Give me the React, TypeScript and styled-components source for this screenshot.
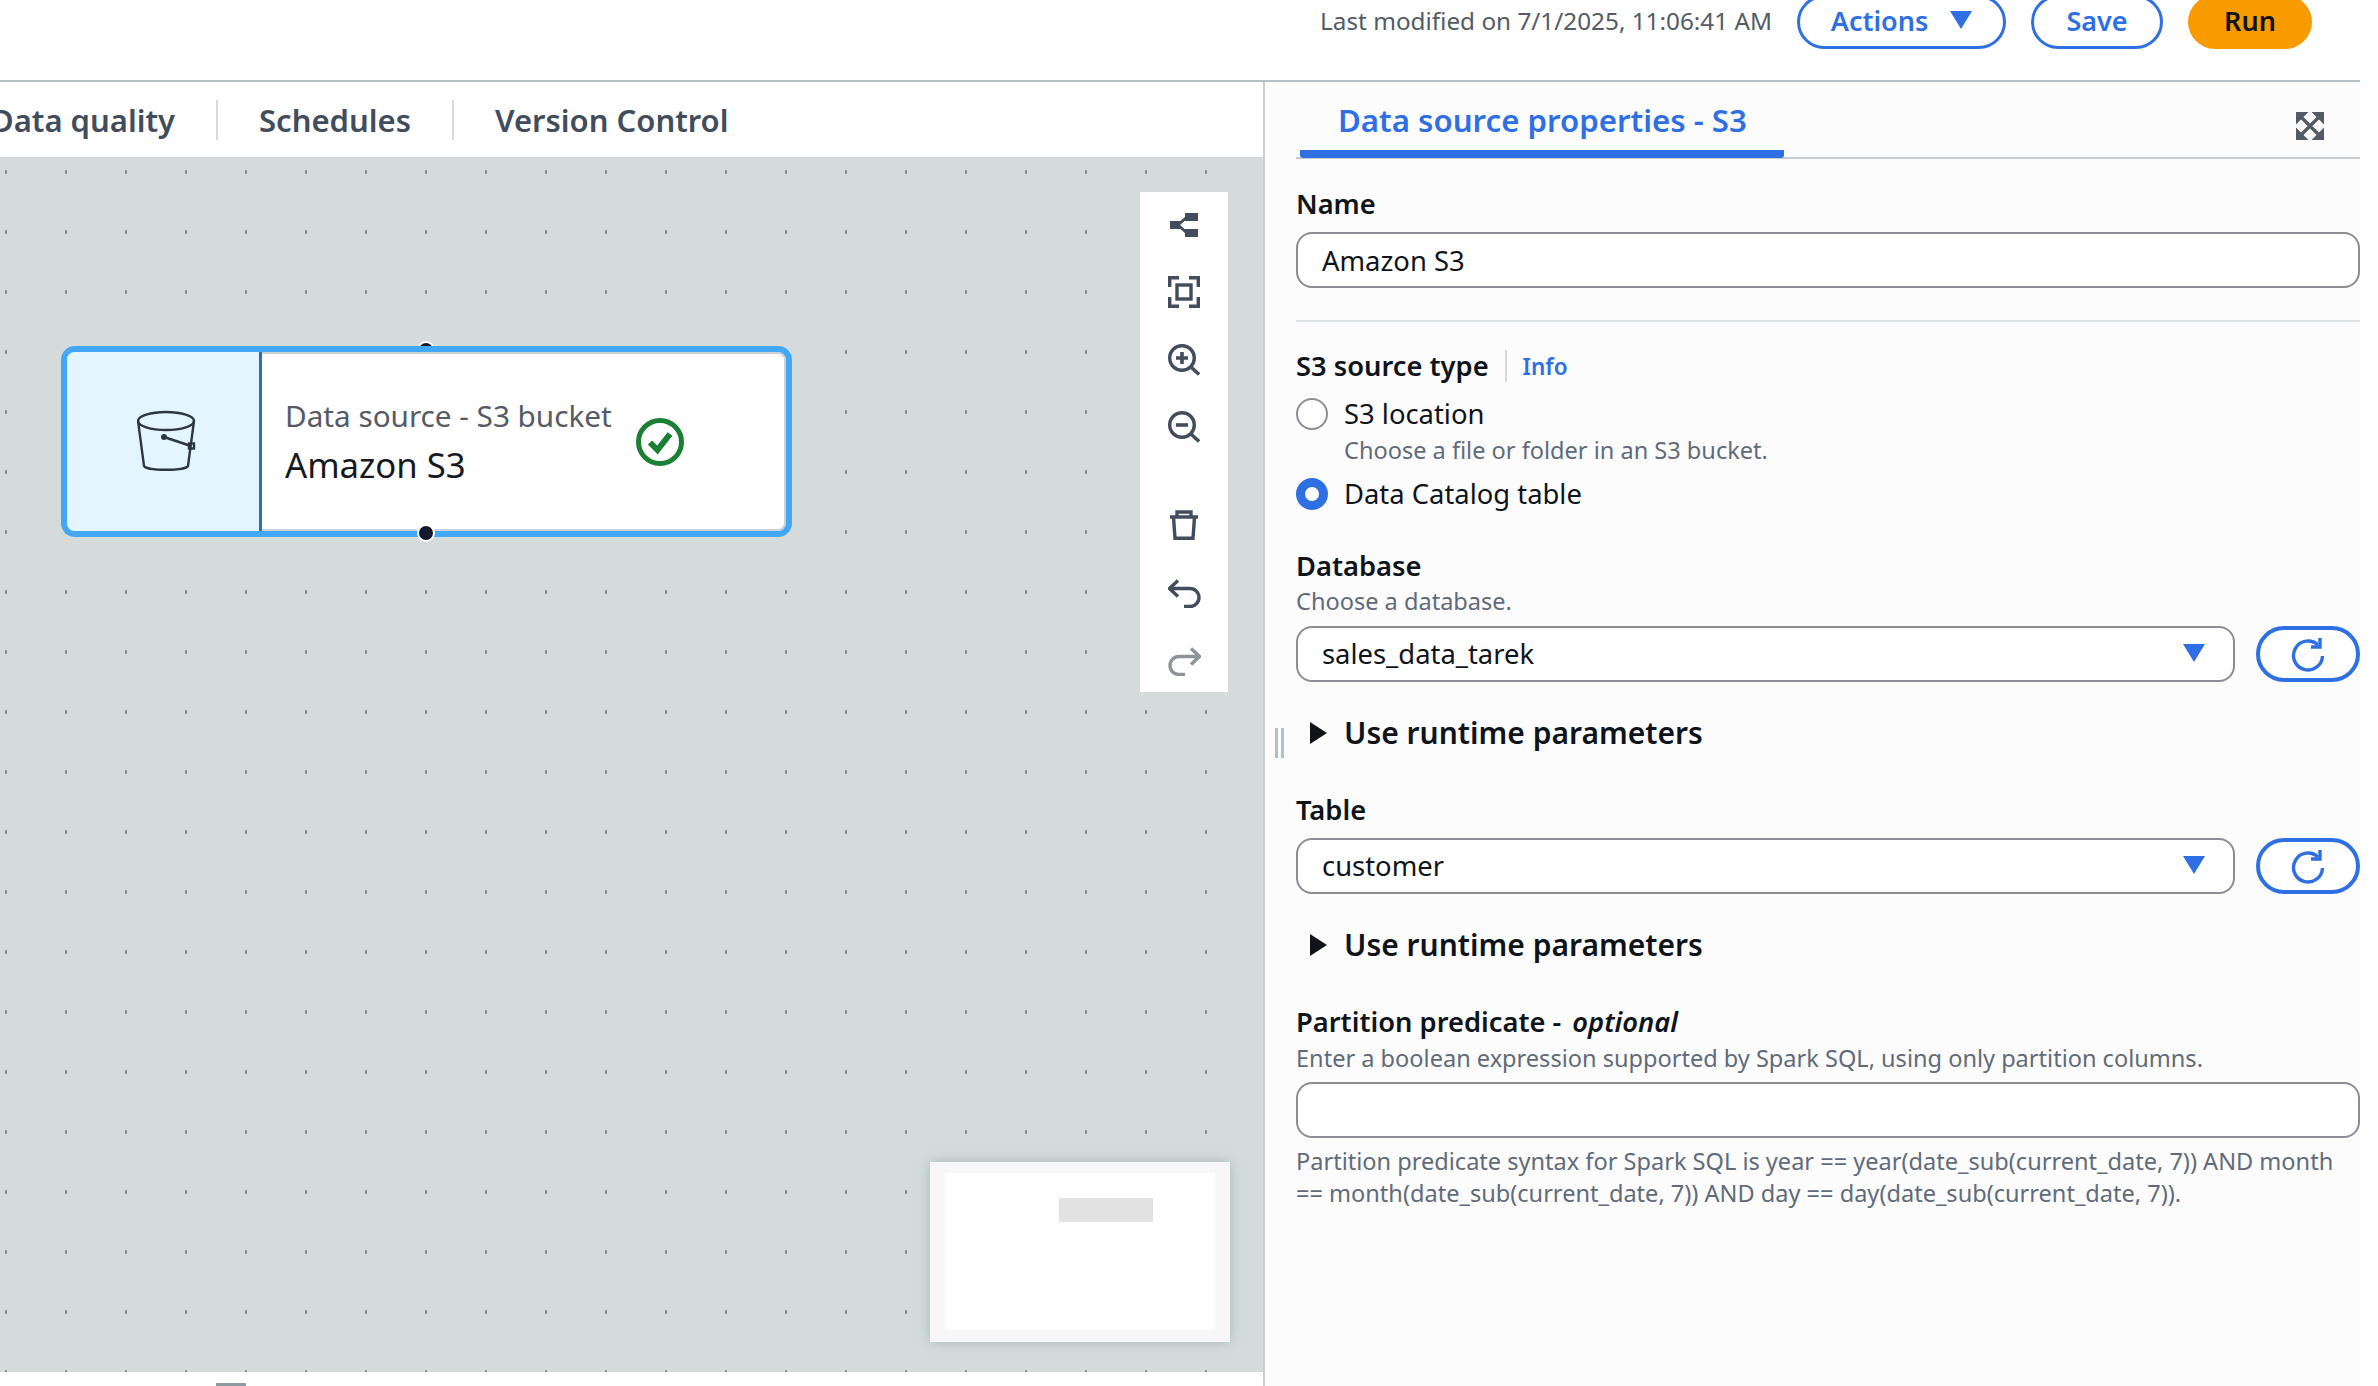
import React from "react";
import styled, { createGlobalStyle } from "styled-components";

const Global = createGlobalStyle`
  html, body { margin: 0; padding: 0; background: #fff; }
  body { font-family: "Noto Sans", "Open Sans", sans-serif; color: #0f141a; }
  * { box-sizing: border-box; }
`;

const BLUE = "#2f6fe4";
const INK = "#414d5c";

const Page = styled.div`
  width: 2378px;
  height: 1386px;
  overflow: hidden;
  background: #fff;
`;
const Frame = styled.div`
  width: 2360px;
  height: 1386px;
  display: flex;
  flex-direction: column;
`;
const Header = styled.header`
  height: 82px;
  flex: none;
  padding: 0 48px 36px 0;
  border-bottom: 2px solid #b4c0c4;
  display: flex;
  justify-content: flex-end;
  align-items: center;
`;
const Modified = styled.span`
  font-size: 24.3px;
  color: #545b64;
  white-space: nowrap;
  margin-top: -3px;
`;
const Pill = styled.button<{ $primary?: boolean; $w: number }>`
  width: ${(p) => p.$w}px;
  height: 54px;
  flex: none;
  border-radius: 27px;
  font: 600 27px "Noto Sans", sans-serif;
  display: flex;
  align-items: center;
  justify-content: center;
  gap: 22px;
  padding: 0 0 3px;
  margin-left: 25px;
  border: ${(p) => (p.$primary ? "none" : `3px solid ${BLUE}`)};
  background: ${(p) => (p.$primary ? "#f89b00" : "#fff")};
  color: ${(p) => (p.$primary ? "#0f141a" : BLUE)};
`;
const Body = styled.div`
  flex: 1;
  min-height: 0;
  display: flex;
`;
const LeftPane = styled.main`
  width: 1263px;
  flex: none;
  display: flex;
  flex-direction: column;
  overflow: hidden;
`;
const TabBar = styled.nav`
  height: 77px;
  flex: none;
  display: flex;
  align-items: center;
  border-bottom: 2px solid #d5d9db;
  background: #fff;
  margin-left: -9px;
`;
const TabItem = styled.span<{ $divided?: boolean }>`
  font-size: 31px;
  font-weight: 600;
  color: ${INK};
  white-space: nowrap;
  height: 40px;
  line-height: 41px;
  padding: 0 41px;
  border-left: ${(p) => (p.$divided ? "2px solid #d5d9db" : "none")};
  &:first-child { padding-left: 0; }
`;
const Canvas = styled.div`
  flex: 1;
  position: relative;
  background-color: #d5dbdb;
  background-image: radial-gradient(ellipse 1.4px 2.2px at center, #7d8688 70%, transparent 100%);
  background-size: 60px 60px;
  background-position: -24px -17px;
`;
const NodeWrap = styled.div`
  position: absolute;
  left: 61px;
  top: 187px;
  width: 731px;
  height: 191px;
`;
const Handle = styled.span<{ $top: number; $z: number }>`
  position: absolute;
  left: 356px;
  top: ${(p) => p.$top}px;
  z-index: ${(p) => p.$z};
  width: 18px;
  height: 18px;
  border-radius: 50%;
  background: #16162e;
  border: 2px solid #fff;
`;
const Node = styled.div`
  position: relative;
  z-index: 1;
  width: 100%;
  height: 100%;
  border: 6px solid #42a7f5;
  border-radius: 14px;
  background: #fff;
  display: flex;
  overflow: hidden;
  box-shadow: inset 0 0 0 2px #cdd3d5;
`;
const NodeIcon = styled.div`
  width: 195px;
  flex: none;
  background: #e3f5ff;
  border-right: 3px solid #2f6fb5;
  display: flex;
  align-items: center;
  justify-content: center;
  padding-left: 12px;
`;
const NodeBody = styled.div`
  display: flex;
  align-items: center;
  gap: 24px;
  padding-left: 23px;
`;
const NodeText = styled.div`
  display: flex;
  flex-direction: column;
  gap: 9px;
  margin-top: -2px;
`;
const NodeKind = styled.span`
  font-size: 29.7px;
  line-height: 40px;
  color: #545b64;
  white-space: nowrap;
`;
const NodeName = styled.span`
  font-size: 34.7px;
  line-height: 40px;
  color: #16191f;
  white-space: nowrap;
`;
const Toolbar = styled.aside`
  position: absolute;
  left: 1140px;
  top: 33px;
  width: 88px;
  padding-top: 4px;
  height: 500px;
  background: #fff;
  display: flex;
  flex-direction: column;
`;
const ToolGroup = styled.div<{ $gap: number; $mt?: number }>`
  display: flex;
  flex-direction: column;
  gap: ${(p) => p.$gap}px;
  margin-top: ${(p) => p.$mt ?? 0}px;
`;
const Tool = styled.span`
  height: 58px;
  display: flex;
  align-items: center;
  justify-content: center;
`;
const Minimap = styled.div`
  position: absolute;
  left: 930px;
  top: 1003px;
  width: 300px;
  height: 180px;
  padding: 11px 15px 12px;
  background: #f7f7f7;
  box-shadow: 0 0 12px rgba(90, 120, 125, 0.35);
`;
const MinimapView = styled.div`
  height: 100%;
  background: #fff;
  padding: 25px 62px 0 114px;
`;
const MinimapNode = styled.div`
  height: 24px;
  background: #e2e2e2;
`;
const Footer = styled.div`
  height: 14px;
  flex: none;
  background: #fff;
  padding: 11px 0 0 216px;
`;
const FootGrip = styled.div`
  width: 30px;
  height: 3px;
  background: #8d9a9f;
`;
const Panel = styled.section`
  flex: 1;
  min-width: 0;
  position: relative;
  background: #fcfcfc;
  border-left: 2px solid #c9ced4;
  padding-left: 31px;
`;
const PanelHead = styled.div`
  height: 77px;
  border-bottom: 2px solid #c8ccd2;
  display: flex;
  align-items: flex-start;
  justify-content: space-between;
`;
const PanelTab = styled.div`
  width: 484px;
  height: 76px;
  margin-left: 4px;
  padding: 19px 0 0 38px;
  font-size: 31.2px;
  line-height: 38px;
  font-weight: 600;
  color: ${BLUE};
  white-space: nowrap;
  border-bottom: 8px solid ${BLUE};
  border-radius: 0 0 3px 3px;
`;
const ExpandSlot = styled.span`
  margin: 30px 36px 0 0;
  display: flex;
`;
const Label = styled.div<{ $mt: number }>`
  font-size: 27.3px;
  line-height: 32px;
  font-weight: 600;
  color: #0f141a;
  margin-top: ${(p) => p.$mt}px;
  display: flex;
  align-items: center;
  white-space: nowrap;
  em { font-style: italic; margin-left: 11px; }
`;
const InfoLink = styled.span`
  font-size: 22.5px;
  font-weight: 600;
  color: ${BLUE};
  margin-left: 16px;
  padding-left: 16px;
  border-left: 2px solid #d5d9db;
  height: 32px;
  line-height: 34px;
`;
const Hint = styled.div<{ $mt: number; $ml?: number; $pr?: number }>`
  font-size: 23.55px;
  line-height: 32px;
  color: #5f6b7a;
  margin-top: ${(p) => p.$mt}px;
  margin-left: ${(p) => p.$ml ?? 0}px;
  padding-right: ${(p) => p.$pr ?? 0}px;
`;
const TextField = styled.input<{ $mt: number }>`
  display: block;
  width: 100%;
  height: 56px;
  margin-top: ${(p) => p.$mt}px;
  padding: 0 24px;
  border: 2px solid #8c8c94;
  border-radius: 16px;
  background: #fff;
  font: 27.4px "Noto Sans", sans-serif;
  color: #0f141a;
  outline: none;
`;
const Rule = styled.hr`
  height: 2px;
  border: none;
  background: #dfe3e5;
  margin: 32px 0 0;
`;
const RadioRow = styled.div<{ $mt: number }>`
  display: flex;
  align-items: center;
  gap: 16px;
  margin-top: ${(p) => p.$mt}px;
  font-size: 27.4px;
  line-height: 32px;
  color: #0f141a;
`;
const Radio = styled.span<{ $on?: boolean }>`
  width: 32px;
  height: 32px;
  border-radius: 50%;
  background: #fff;
  border: ${(p) => (p.$on ? `9px solid ${BLUE}` : "2px solid #8c8c94")};
`;
const SelectRow = styled.div<{ $mt: number }>`
  display: flex;
  gap: 21px;
  margin-top: ${(p) => p.$mt}px;
`;
const SelectBox = styled.div`
  flex: 1;
  height: 56px;
  padding: 0 28px 2px 24px;
  border: 2px solid #8c8c94;
  border-radius: 16px;
  background: #fff;
  display: flex;
  align-items: center;
  justify-content: space-between;
  font-size: 27.4px;
  color: #0f141a;
`;
const RefreshButton = styled.button`
  width: 104px;
  height: 56px;
  flex: none;
  padding: 0;
  border-radius: 28px;
  border: 4px solid ${BLUE};
  background: #fff;
  display: flex;
  align-items: center;
  justify-content: center;
`;
const Expander = styled.div`
  display: flex;
  align-items: center;
  gap: 17px;
  margin-top: 35px;
  padding-left: 14px;
  font-size: 30px;
  line-height: 32px;
  font-weight: 600;
  color: #0f141a;
`;
const Grip = styled.span`
  position: absolute;
  left: 10px;
  top: 646px;
  width: 9px;
  height: 30px;
  border-left: 3px solid #b4c0c4;
  border-right: 3px solid #b4c0c4;
`;

const Caret = ({ size = 22 }: { size?: number }) => (
  <svg width={size} height={size * 0.82} viewBox="0 0 22 18">
    <path d="M0 0H22L11 18Z" fill={BLUE} />
  </svg>
);
const Refresh = () => (
  <svg width="36" height="36" viewBox="0 0 36 36" fill="none" stroke={BLUE} strokeWidth="3.4">
    <path d="M28 9A14.5 14.5 0 1 0 32.5 20" />
    <path d="M30 2V11H21" />
  </svg>
);
const ShareIcon = () => (
  <svg width="28" height="24" viewBox="0 0 28 24" fill="#414d5c">
    <rect x="0" y="8" width="10" height="8" />
    <rect x="15" y="0" width="13" height="8" />
    <rect x="15" y="16" width="13" height="8" />
    <path d="M8 12L17 4M8 12L17 20" stroke="#414d5c" strokeWidth="3" fill="none" />
  </svg>
);
const FitIcon = () => (
  <svg width="32" height="32" viewBox="0 0 32 32" fill="none" stroke="#414d5c" strokeWidth="3.4">
    <path d="M1.7 11V1.7H11M21 1.7H30.3V11M30.3 21V30.3H21M11 30.3H1.7V21" />
    <rect x="9" y="9" width="14" height="14" />
  </svg>
);
const ZoomIcon = ({ plus }: { plus?: boolean }) => (
  <svg width="32" height="32" viewBox="0 0 32 32" fill="none" stroke="#414d5c" strokeWidth="3.4">
    <circle cx="14" cy="14" r="12.3" />
    <path d="M23 23L31 30.5" />
    <path d={plus ? "M8 14H20M14 8V20" : "M8 14H20"} strokeWidth="3.6" />
  </svg>
);
const TrashIcon = () => (
  <svg width="28" height="30" viewBox="0 0 28 30" fill="none" stroke="#414d5c" strokeWidth="3.4">
    <path d="M0 7H28M7 7V2H21V7M3.5 7L5 28.3H23L24.5 7" />
  </svg>
);
const UndoIcon = ({ color = "#414d5c", flip }: { color?: string; flip?: boolean }) => (
  <svg width="33" height="29" viewBox="0 0 33 29" fill="none" stroke={color} strokeWidth="3.4" style={flip ? { transform: "scaleX(-1)" } : undefined}>
    <path d="M10 1.5L1.5 9.5L10 17.5M1.5 9.5H22A9 9 0 0 1 22 27.5H16" />
  </svg>
);
const ExpandIcon = () => (
  <svg width="28" height="28" viewBox="0 0 28 28" fill="#545b64" stroke="#545b64">
    <path d="M0 0H12.5L0 12.5ZM28 0H15.5L28 12.5ZM0 28H12.5L0 15.5ZM28 28H15.5L28 15.5Z" strokeWidth="0" />
    <path d="M3 3L25 25M25 3L3 25" strokeWidth="3.4" />
  </svg>
);
const BucketIcon = () => (
  <svg width="64" height="66" viewBox="0 0 64 66" fill="none" stroke="#2d3642" strokeWidth="2.4">
    <ellipse cx="29" cy="12" rx="28" ry="9" />
    <path d="M1 12L7 57C9 62 49 62 51 57L57 12" />
    <circle cx="27" cy="28" r="1.8" fill="#2d3642" />
    <path d="M27 28L54 37" strokeWidth="2.8" />
    <rect x="52" y="34.5" width="5" height="5" />
  </svg>
);
const CheckIcon = () => (
  <svg width="48" height="48" viewBox="0 0 48 48" fill="none" stroke="#1b7f34">
    <circle cx="24" cy="24" r="21.5" strokeWidth="5" />
    <path d="M14 24.5L21.5 32L34 16" strokeWidth="6" />
  </svg>
);
const Triangle = () => (
  <svg width="17" height="22" viewBox="0 0 17 22">
    <path d="M0 0L17 11L0 22Z" fill="#0f141a" />
  </svg>
);

export default function App() {
  return (
    <Page>
      <Global />
      <Frame>
        <Header>
          <Modified>Last modified on 7/1/2025, 11:06:41 AM</Modified>
          <Pill $w={209}>
            Actions <Caret />
          </Pill>
          <Pill $w={132}>Save</Pill>
          <Pill $w={124} $primary>
            Run
          </Pill>
        </Header>
        <Body>
          <LeftPane>
            <TabBar>
              <TabItem>Data quality</TabItem>
              <TabItem $divided>Schedules</TabItem>
              <TabItem $divided>Version Control</TabItem>
            </TabBar>
            <Canvas>
              <NodeWrap>
                <Handle $top={-5} $z={0} />
                <Node>
                  <NodeIcon>
                    <BucketIcon />
                  </NodeIcon>
                  <NodeBody>
                    <NodeText>
                      <NodeKind>Data source - S3 bucket</NodeKind>
                      <NodeName>Amazon S3</NodeName>
                    </NodeText>
                    <CheckIcon />
                  </NodeBody>
                </Node>
                <Handle $top={178} $z={2} />
              </NodeWrap>
              <Toolbar>
                <ToolGroup $gap={9.4}>
                  <Tool><ShareIcon /></Tool>
                  <Tool><FitIcon /></Tool>
                  <Tool><ZoomIcon plus /></Tool>
                  <Tool><ZoomIcon /></Tool>
                </ToolGroup>
                <ToolGroup $gap={10} $mt={40}>
                  <Tool><TrashIcon /></Tool>
                  <Tool><UndoIcon /></Tool>
                  <Tool><UndoIcon flip color="#8d939b" /></Tool>
                </ToolGroup>
              </Toolbar>
              <Minimap>
                <MinimapView>
                  <MinimapNode />
                </MinimapView>
              </Minimap>
            </Canvas>
            <Footer>
              <FootGrip />
            </Footer>
          </LeftPane>
          <Panel>
            <Grip />
            <PanelHead>
              <PanelTab>Data source properties - S3</PanelTab>
              <ExpandSlot>
                <ExpandIcon />
              </ExpandSlot>
            </PanelHead>
            <Label $mt={29}>Name</Label>
            <TextField $mt={12} readOnly value="Amazon S3" />
            <Rule />
            <Label $mt={28}>
              S3 source type
              <InfoLink>Info</InfoLink>
            </Label>
            <RadioRow $mt={16}>
              <Radio />
              S3 location
            </RadioRow>
            <Hint $mt={4} $ml={48}>Choose a file or folder in an S3 bucket.</Hint>
            <RadioRow $mt={12}>
              <Radio $on />
              Data Catalog table
            </RadioRow>
            <Label $mt={40}>Database</Label>
            <Hint $mt={3}>Choose a database.</Hint>
            <SelectRow $mt={9}>
              <SelectBox>
                sales_data_tarek
                <Caret />
              </SelectBox>
              <RefreshButton><Refresh /></RefreshButton>
            </SelectRow>
            <Expander><Triangle />Use runtime parameters</Expander>
            <Label $mt={45}>Table</Label>
            <SelectRow $mt={12}>
              <SelectBox>
                customer
                <Caret />
              </SelectBox>
              <RefreshButton><Refresh /></RefreshButton>
            </SelectRow>
            <Expander><Triangle />Use runtime parameters</Expander>
            <Label $mt={45}>
              Partition predicate - <em>optional</em>
            </Label>
            <Hint $mt={4}>Enter a boolean expression supported by Spark SQL, using only partition columns.</Hint>
            <TextField $mt={8} readOnly value="" />
            <Hint $mt={7} $pr={20}>
              Partition predicate syntax for Spark SQL is year == year(date_sub(current_date, 7)) AND month == month(date_sub(current_date, 7)) AND day == day(date_sub(current_date, 7)).
            </Hint>
          </Panel>
        </Body>
      </Frame>
    </Page>
  );
}
